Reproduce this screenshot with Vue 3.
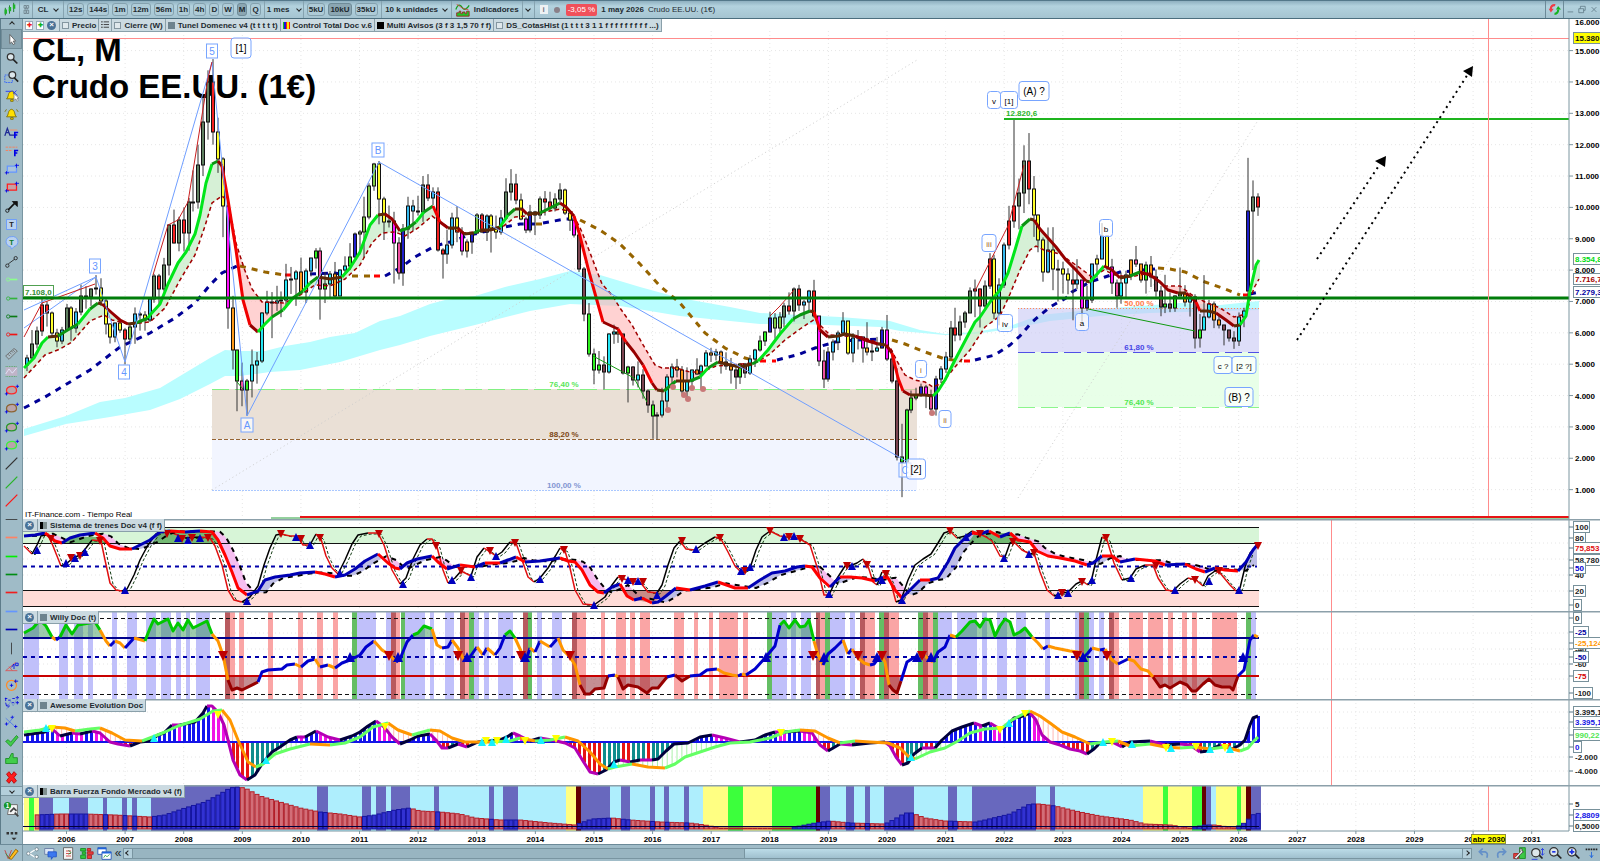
<script setup>
const X0 = 66.5;
const STEP = 4.884;
const RIGHT = 1569;

const monthX = (m) => X0 + STEP * m;
const priceY = (p) => 521 - 3.136 * p;

function pts(text) {
  return text
    .trim()
    .split(/\s+/)
    .map((pair) => pair.split(",").map(Number));
}

function at(list, x) {
  if (x <= list[0][0]) return list[0][1];
  for (let i = 1; i < list.length; i++) {
    const [x1, y1] = list[i - 1];
    const [x2, y2] = list[i];
    if (x <= x2) return y1 + ((y2 - y1) * (x - x1)) / (x2 - x1);
  }
  return list[list.length - 1][1];
}

const toPath = (list) => "M" + list.map((p) => p.join(" ")).join("L");

// splits a line into runs that share one colour
function runs(list, colorOf) {
  const out = [];
  for (let i = 1; i < list.length; i++) {
    const a = list[i - 1];
    const b = list[i];
    const color = colorOf((a[1] - b[1]) / (b[0] - a[0]), (a[1] + b[1]) / 2);
    const last = out[out.length - 1];
    if (last && last.color === color) last.list.push(b);
    else out.push({ color, list: [a, b] });
  }
  return out.map((r) => ({ color: r.color, d: toPath(r.list) }));
}

// area between two lines, split by which one is on top
function between(a, b, from = 24, to = 1259) {
  let up = "";
  let down = "";
  for (let x = from; x < to; x += 3) {
    const y1 = at(a, x);
    const y2 = at(b, x);
    const d = `M${x} ${y1}L${x + 3} ${at(a, x + 3)}V${at(b, x + 3)}L${x} ${y2}Z`;
    if (y1 < y2) up += d;
    else down += d;
  }
  return { up, down };
}

/* ---------- price ---------- */

// close, high, low per month, May 2005 on
const ohlc = pts(`
52,53,47.8 56.5,60.9,51 60.6,62,55 68.9,70.8,59 66.2,70,62 59.8,66.8,58.5 57.3,61.3,55.4 61,61.9,56.4
67.9,69.2,61 61.4,68.5,57.5 66.6,67.9,60 71.9,75.4,65.6 71.3,74.9,67.7 73.9,74.2,68.6 74.4,78.4,72.2 70.3,77.4,68.6 62.9,71,59.5 58.7,63,56.6 63.1,63.3,57 61,64.2,60
58.1,61.5,49.9 61.8,62.5,57 65.9,68.1,56.5 65.7,66.7,60.7 64,66.9,60.7 70.7,71.1,63.5 78.2,78.8,69.6 74,78.8,68.6 81.7,83.9,73.2 94.5,94.7,78.3 88.7,99.3,88.5 96,97,86
91.7,100,86 101.8,103,86.2 101.6,111.8,98.7 113.5,120,99.6 127.3,135,110 140,143.7,121.6 124,147.3,120 115.5,128.6,111 100.6,116,90.5 67.8,101,61.3 54.4,71.8,48.3 44.6,54.6,35
41.7,50.5,36.6 44.8,45.3,33.6 49.7,54.7,39.4 51.1,53.9,43.8 66.3,66.6,50.4 69.9,73.4,65.6 69.4,73,58.3 70,75,67 70.6,73.2,65 77,82,68 77.3,81,72.4 79.4,80,68.6
72.9,84,72.4 79.7,80.5,69.5 83.8,83.9,78 86.1,87,80.5 74,87.2,64.2 75.6,79.4,69.5 78.9,79.7,71 71.9,82.6,70.8 80,80.2,72.8 81.4,84.4,79.3 84.1,88.6,80 91.4,92,83.7
92.2,92.8,85 97,103.4,83.9 106.7,107.7,96.2 113.9,114.2,105.3 102.7,114.8,94.6 95.4,103.4,89.6 95.7,100.6,93.6 88.8,98.6,75.7 79.2,90.5,77 93.2,94.7,75 100.4,103.4,90 98.8,102.4,92.5
98.5,103.7,97.4 107,110,95.4 103,110.6,102 104.9,106.4,100.7 86.5,106.4,85.9 85,87,77.3 88,92.9,82 96.5,98.3,86.9 92.2,100.4,88.9 86.2,93.7,84.7 88.9,89.8,84 91.8,91.9,85.2
97.5,98.2,91.5 92,98.2,91.9 97.2,97.8,89.3 93.5,97.9,85.6 92,97.4,90 96.6,99.2,91.3 105,109.3,96 107.6,112.2,102.2 102.3,110.7,101 96.4,104.4,95.9 92.7,97,91.8 98.4,100.8,92
97.5,98.9,91.2 102.6,103.5,96.3 101.6,105.2,97.4 99.7,105,98.7 102.7,104.5,98.7 105.4,107.7,101.6 98.2,106,97.6 96,98.9,92.5 91.2,96,90.4 80.5,91.8,79.4 66.1,81,63.7 53.3,69.5,52.4
48.2,55,43.6 49.8,54.2,47 47.6,52.5,42 59.6,59.9,47 60.3,62.6,56.5 59.5,61.8,56.8 47.1,59.7,46.7 49.2,49.5,37.8 45,49.4,43.2 46.6,50.9,42.6 41.6,48.4,39 37,42,34.5
33.6,38.4,26.2 33.7,34.7,26 38.3,42.5,33 45.9,46.8,35.2 49.1,50.2,43 48.3,51.7,45.8 41.6,49.4,40.6 44.7,49,39.2 48.2,48.3,42.6 46.9,51.9,46.6 49.4,49.9,42.2 53.7,54.5,49.9
52.8,55.2,50.7 54,54.9,51.2 50.6,54.4,47 49.3,53.8,48.2 48.3,52,43.8 46,49.4,42.1 50.2,50.4,43.7 47.2,50.4,45.6 51.7,52.9,46.6 54.4,54.9,49.1 57.4,59.1,54 60.4,60.5,55.8
64.7,66.7,60.1 61.6,66.3,58.1 64.9,66.6,59.9 68.6,69.6,61.8 67,72.9,65.8 74.1,74.5,63.6 68.8,75.3,67 69.8,70.5,64.4 73.2,73.7,66.9 65.3,76.9,64.8 50.9,65.3,49.4 45.4,54.6,42.4
53.8,55.4,44.4 57.2,57.9,51.2 60.1,60.7,54.5 63.9,66.6,60 53.5,63.8,53 58.5,59.9,50.6 58.6,60.9,54.7 55.1,58.8,50.5 54,63.4,52.8 54.2,56.9,51 55.2,58.7,53.9 61,61.9,55
51.6,65.7,51 44.8,54.5,43.9 20.5,48.7,19.3 18.8,31,7.6 35.5,35.8,17 39.3,41.6,34.4 40.3,42.5,38.5 42.6,43.8,39.6 40.2,43.4,36 35.8,41.9,34.9 45.3,46.3,33.6 48.5,49.4,44
52.2,53.9,47.2 61.5,63.8,51.6 59.2,68,57.3 63.6,65.5,57.6 66.3,67,61.6 73.5,74.5,66.4 73.9,77,65 68.5,74.2,61.7 75,76.7,67 83.6,85.4,74 66.2,84.9,64.4 75.2,77.4,62.4
88.1,88.8,74.3 95.7,100.5,86.6 100.3,128.2,93.5 104.7,109.2,93 114.7,119.8,98.2 105.8,123.7,101 97.5,110,90.6 89.5,97.7,85.7 79.5,90.4,76.3 86.5,93.6,79 80.5,93.7,73.6 80.3,83.3,70
78.9,82.7,72.5 77,80.6,72.3 75.7,81,64 76.8,83.5,73.9 68,76.9,63.6 70.6,75,67 81.8,82,69.5 83.6,84.9,77.6 90.8,95,83.5 81,91,80 76,83.6,72.4 71.6,77,68
75.8,79.3,69.3 78.3,79.8,71.4 83.2,83.4,76.8 81.9,87.7,81 77,81.9,76 81.5,82.7,72.5 77.9,84.5,74.6 73.5,80.2,71.5 68.2,75,65.3 69.3,78.5,66.3 68,72.9,66.6 71.7,72,66.7
72.5,80.8,72 69.8,75.2,68.4 71.5,72,65.2 58.2,72.3,55 60.8,66,55.3 65.1,78.4,61.6 69.3,70.5,64.6 64,70,61.5 62.4,65.6,61.4 61,62.6,56 58.5,61,57.2 57.4,60.5,54.9
65.2,66.5,55.8 67,68,61.8 99,115.8,70 103.4,108.6,80 100.2,104.5,97.3
`);

const candleCodes =
  "BDDRRYYB" +
  "DYBDRDRYYYBY" +
  "RLBYYBDRDDRD" +
  "RDDDDDRYYMOG" +
  "PGCCCCOCBCCC" +
  "OCBGPGCOCCGN" +
  "LLLLYYBMPNBB" +
  "BDRBRRBBYMON" +
  "LRBYYBDDRYMN" +
  "YLRRLDYYMWWG" +
  "GGWCCOWGWCWW" +
  "GGCCCOOCCOCC" +
  "OCOWOWGWCCGG" +
  "NLLDRDRBBRMP" +
  "NBBBYBYMOCCN" +
  "MWWGGGGNMPNB" +
  "BDRDDDRRDRYB" +
  "BRRDDRYYYBYY" +
  "YYRBMNBYBYMP" +
  "CCOPOGOWWGWG" +
  "GOCWGCCOOWWW" +
  "CCNDR";

const candleColors = {
  D: "#5f7f60",
  R: "#f52020",
  Y: "#ffff2a",
  M: "#ff10ff",
  O: "#ff9a1a",
  G: "#2df01e",
  C: "#25e6f5",
  B: "#35b8ee",
  N: "#2020cc",
  L: "#82cc45",
  W: "#7c4450",
  P: "#ee4fa0",
};

const candles = ohlc.map(([close, high, low], i) => {
  let open = i ? ohlc[i - 1][0] : 49.7;
  if (i === 250) open = 73.5;
  const top = Math.round(priceY(Math.max(open, close)));
  return {
    x: Math.round(monthX(i - 8)),
    top,
    height: Math.max(1, Math.round(priceY(Math.min(open, close))) - top),
    high: priceY(high),
    low: priceY(low),
    color: candleColors[candleCodes[i]],
  };
});

const mainAvg = pts(`24,368 34,358 42,343 48,337 58,336 66,331 78,324 90,309 98,303 102,304 112,313 120,320 128,324 136,323 148,318 150,315 160,304 168,284 178,263 186,252 195,234 200,215 206,183 212,164 218,161 222,166 228,200 236,250 243,300 250,325 258,332 264,325 272,317 283,310 293,298 303,291 310,283 318,277 330,279 342,277 350,268 360,252 370,225 378,215 385,214 392,219 400,231 408,228 416,222 424,212 433,206 440,222 448,228 458,228 464,234 474,233 480,230 490,230 500,227 508,215 515,209 522,209 527,214 540,213 548,209 560,203 566,207 574,216 580,236 588,268 594,290 603,322 618,329 626,342 634,352 643,365 652,383 657,390 664,391 676,381 690,381 700,377 708,368 718,362 726,364 740,367 752,364 758,361 768,350 780,334 793,319 800,315 810,311 814,312 820,330 828,337 838,336 845,334 855,336 868,341 878,344 886,345 892,353 898,378 903,391 910,395 925,395 933,396 938,391 945,380 955,360 965,341 975,322 980,317 990,302 1000,290 1008,273 1015,250 1022,226 1030,219 1034,220 1040,229 1048,238 1056,247 1066,260 1076,270 1086,281 1090,282 1098,273 1104,266 1112,270 1120,278 1130,276 1140,272 1150,275 1160,282 1168,290 1178,293 1186,293 1196,302 1200,311 1208,311 1216,313 1226,320 1234,326 1240,325 1246,316 1250,291 1256,265 1259,260`);
const slowAvg = pts(`24,378 45,355 60,349 72,342 90,321 104,315 112,320 128,324 140,323 150,322 165,308 180,280 195,255 205,226 212,203 222,196 228,201 236,243 244,268 252,289 262,302 285,303 300,295 315,285 330,286 345,279 360,265 372,243 382,233 395,232 405,236 418,228 432,216 440,222 450,228 462,233 475,232 500,229 515,217 525,216 540,213 560,209 572,212 582,232 592,258 602,284 612,295 620,308 632,325 642,343 655,365 662,368 676,368 690,372 702,372 716,366 755,363 770,354 785,340 800,329 815,319 820,325 830,335 862,337 890,347 897,361 905,375 915,380 925,382 933,387 942,383 955,367 970,350 985,327 1000,316 1010,294 1020,270 1030,250 1036,246 1044,250 1060,254 1080,268 1092,277 1104,270 1115,275 1130,277 1150,273 1165,286 1180,286 1192,295 1205,302 1220,308 1234,317 1246,314 1254,288 1259,279`);

const mainRuns = runs(mainAvg, (s) => {
  if (s > 0.9) return "#00e61a";
  if (s > 0.35) return "#0a9412";
  if (s > -0.3) return "#5c2a08";
  if (s > -1.6) return "#960000";
  return "#f00000";
});
const mainFill = between(mainAvg, slowAvg);

const longAvg = [
  ["#000096", "24,408 45,397 60,388 90,370 120,347 150,333 175,318 195,303 210,285 222,273 237,266"],
  ["#966400", "240,266 265,272 284,275"],
  ["#f00", "285,275 293,275"],
  ["#000096", "310,274 335,273 345,275"],
  ["#966400", "352,276 373,276"],
  ["#f00", "374,276 383,276"],
  ["#000096", "385,276 400,268 415,257 435,246 450,242 470,235 500,228 520,224 535,224"],
  ["#966400", "536,224 542,224"],
  ["#000096", "543,223 565,219 573,219"],
  ["#966400", "580,220 600,230 620,244 640,264 660,286 680,303 705,333 725,348 745,358 757,361"],
  ["#f00", "760,361 776,361"],
  ["#000096", "777,360 800,354 815,348 835,342 855,340 880,339"],
  ["#966400", "892,340 905,344 925,352 945,359 962,361"],
  ["#f00", "964,361 971,361"],
  ["#000096", "975,360 995,355 1010,345 1020,336 1032,322 1050,307 1066,298 1072,292 1090,282 1105,277 1120,272 1155,269"],
  ["#966400", "1158,268 1170,269 1185,272 1205,282 1225,289 1240,295"],
  ["#f00", "1243,295 1248,295"],
  ["#000096", "1250,294 1259,292"],
].map(([color, p]) => ({ color, d: toPath(pts(p)) }));

const cloud =
  "24,429 66,416 100,402 125,398 160,388 190,370 210,358 225,350 240,351 265,351 285,346 310,342 330,337 355,333 380,321 400,316 430,304 445,300 475,296 505,287 540,279 570,271 600,275 640,287 680,298 730,307 760,313 800,315 840,317 890,321 920,330 945,334 975,332 1010,326 1040,315 1100,309 1180,303 1220,305 1259,301 " +
  "1259,310 1220,311 1150,313 1100,316 1050,321 1010,329 975,334 945,335 900,331 880,327 800,324 760,324 680,316 620,306 570,304 530,311 475,325 430,336 400,345 380,350 340,362 300,370 270,372 240,376 225,376 210,384 180,399 150,410 110,417 66,424 24,436";

const waveLines = [
  ["#6f9eff", "24,310 96,277"],
  ["#6f9eff", "24,328 96,277 125,362 212,62 247,416 379,162 906,461"],
  ["#c82020", "24,337 42,303 95,284"],
  ["#c82020", "153,275 168,225 178,220 188,202 208,78 212,62"],
  ["#c82020", "770,316 780,306 794,290"],
  ["#c82020", "975,291 1008,226 1024,165"],
  ["#109a10", "237,382 243,389"],
  ["#109a10", "593,356 634,378 647,402"],
  ["#109a10", "1088,309 1195,331"],
];

const waveTags = [
  { x: 212, y: 51, t: "5", w: 11, h: 14, k: "blue" },
  { x: 95, y: 266, t: "3", w: 11, h: 14, k: "blue" },
  { x: 124, y: 372, t: "4", w: 11, h: 14, k: "blue" },
  { x: 378, y: 150, t: "B", w: 12, h: 14, k: "blue" },
  { x: 247, y: 425, t: "A", w: 12, h: 14, k: "blue" },
  { x: 905, y: 470, t: "C", w: 12, h: 14, k: "blue" },
  { x: 241, y: 48, t: "[1]", w: 20, h: 20, k: "round" },
  { x: 916, y: 469, t: "[2]", w: 19, h: 20, k: "round" },
  { x: 989, y: 243, t: "iii", w: 14, h: 17, k: "small orange" },
  { x: 994, y: 100, t: "v", w: 13, h: 17, k: "small" },
  { x: 1009, y: 100, t: "[1]", w: 17, h: 17, k: "small" },
  { x: 1034, y: 91, t: "(A) ?", w: 30, h: 19, k: "round" },
  { x: 1005, y: 323, t: "iv", w: 15, h: 17, k: "small" },
  { x: 921, y: 369, t: "i", w: 11, h: 17, k: "small orange" },
  { x: 945, y: 419, t: "ii", w: 12, h: 17, k: "small orange" },
  { x: 1106, y: 228, t: "b", w: 13, h: 17, k: "small" },
  { x: 1082, y: 322, t: "a", w: 13, h: 17, k: "small" },
  { x: 1223, y: 365, t: "c ?", w: 18, h: 17, k: "small" },
  { x: 1244, y: 365, t: "[2 ?]", w: 24, h: 17, k: "small" },
  { x: 1239, y: 397, t: "(B) ?", w: 28, h: 19, k: "round" },
];

const dots = pts("668,410 684,395 688,399 692,388 673,387 703,389 932,413");

/* ---------- sistema de trenes ---------- */

const fast = pts(`24,546 32,554 37,545 42,534 48,534 53,546 61,566 66,564 73,558 80,555 86,548 92,540 101,541 105,560 110,583 116,590 122,591 127,589 134,575 140,560 148,545 156,534 164,530 175,534 185,538 200,537 210,538 215,546 222,565 228,590 234,600 242,602 250,597 258,586 264,565 270,548 276,535 281,534 290,536 297,536 303,545 310,545 316,534 321,539 326,556 332,568 338,574 345,560 352,544 358,535 368,533 378,533 384,545 392,570 400,584 406,578 413,559 420,545 427,539 432,539 437,547 443,570 448,583 455,578 461,571 471,576 477,557 484,548 490,552 496,556 502,552 510,542 516,543 522,560 528,577 534,582 540,578 548,568 556,555 560,548 565,551 570,568 575,590 583,604 594,605 605,597 612,585 618,577 627,580 640,582 648,592 657,593 662,585 668,565 674,548 680,541 686,549 695,550 705,543 715,537 721,539 728,552 735,566 741,572 750,568 756,550 762,537 770,531 780,536 793,537 800,539 810,545 818,570 824,595 829,595 836,580 845,566 852,565 857,563 863,559 868,566 873,582 877,585 882,572 886,573 891,583 896,602 901,600 908,580 915,565 923,559 931,554 938,543 944,533 950,531 957,538 965,536 972,531 980,534 986,537 992,541 1000,556 1005,557 1010,543 1014,542 1022,550 1030,554 1034,553 1040,572 1047,590 1054,596 1063,593 1068,592 1076,584 1082,581 1088,585 1092,578 1096,560 1102,537 1107,540 1114,563 1122,580 1130,578 1136,569 1145,565 1153,565 1158,578 1166,590 1173,591 1180,584 1188,578 1196,580 1203,586 1208,576 1215,571 1220,573 1230,585 1236,591 1240,588 1245,567 1250,553 1258,545`);
const slow = pts(`24,536 35,535 45,533 55,541 62,543 70,538 80,535 95,533 103,538 110,546 120,549 132,549 140,545 150,540 160,532 170,531 185,532 200,531 212,532 218,540 225,555 232,572 238,588 247,595 258,591 265,580 275,577 290,575 300,573 315,572 325,574 335,577 345,575 355,569 365,561 378,554 388,563 395,568 400,569 407,563 417,559 432,556 438,562 447,569 460,565 475,567 485,563 500,563 508,560 516,557 525,562 540,561 560,558 568,561 575,562 582,570 590,585 598,592 604,593 612,587 620,584 627,596 634,600 642,598 652,603 658,602 666,596 676,588 690,590 705,586 718,582 735,588 748,588 760,580 772,573 785,571 797,567 805,566 812,567 820,578 830,587 840,577 850,577 862,578 875,581 883,577 888,578 895,590 902,598 910,590 920,580 930,580 938,578 948,562 955,548 965,538 972,533 980,534 989,531 1000,537 1010,533 1018,540 1030,542 1037,551 1048,556 1060,558 1075,561 1087,565 1093,563 1102,556 1112,556 1120,562 1135,559 1155,561 1165,565 1185,564 1196,569 1205,572 1215,568 1225,570 1238,571 1246,562 1253,550 1258,544`);
const slowLag = slow
  .filter((p) => p[0] < 1250)
  .map(([x, y], i, all) => [x + 8, i ? (y * 2 + all[i - 1][1]) / 3 : y]);
const fastRuns = runs(fast, (s) => (s > 0 ? "#000" : "#e01010"));
const slowRuns = runs(slow, (s) => (s > 0 ? "#0000b4" : "#ff0000"));
const slowFill = between(slow, slowLag, 33, 1256);
const fastLagPath = toPath(fast.filter((p) => p[0] < 1255).map(([x, y]) => [x + 3, y + 1]));
const slowLagPath = toPath(slowLag);

const trainDown = pts("51,539 71,558 80,556 100,541 167,534 182,539 192,538 208,538 281,534 301,539 320,538 379,534 436,546 461,571 490,551 515,543 564,550 622,579 633,582 643,582 682,541 720,538 745,571 770,531 789,537 800,539 847,566 867,565 886,574 950,531 980,534 1013,542 1034,553 1062,593 1082,582 1106,538 1156,566 1195,580 1219,571 1258,546");
const trainUp = pts("37,550 66,563 75,558 85,552 125,590 178,538 188,540 200,538 247,601 296,537 310,545 340,573 403,584 452,580 471,577 496,556 540,579 594,605 628,580 638,581 657,595 696,549 741,571 750,567 784,537 794,536 829,594 852,566 882,580 902,600 966,537 1004,558 1029,554 1058,595 1068,593 1092,580 1131,578 1175,590 1209,581 1239,590");

const tri = ([x, y], dir, r = 4) =>
  dir === "up"
    ? `${x - r},${y + r} ${x + r},${y + r} ${x},${y - r}`
    : `${x - r},${y - r} ${x + r},${y - r} ${x},${y + r}`;

/* ---------- willy ---------- */

const bands = (color, text) => pts(text).map(([a, b]) => ({ x: a, w: b - a, color }));

const willyBands = [
  ...bands("#c0c0fa", "24,39 59,68 74,83 88,93 112,117 127,137 146,156 161,171 176,181 186,190 196,210 357,376 386,391 405,425 430,434 445,454 474,479 484,489 498,513 537,542 552,562 772,787 791,796 801,811 830,845 850,855 938,952 957,977 982,987 997,1007 1016,1026 1045,1050 1075,1079 1089,1094 1099,1104 1251,1256"),
  ...bands("#faa5a5", "230,235 239,244 268,273 298,303 317,323 333,338 396,400 465,469 577,586 601,605 616,626 630,635 640,650 674,684 694,698 709,713 719,738 743,748 820,825 865,875 889,899 928,933 1114,1119 1129,1143 1148,1163 1168,1173 1182,1187 1192,1197 1212,1237"),
  ...bands("#b85a5f", "225,230 391,396 460,465 523,528 572,577 816,820 860,865 884,889 923,928 1079,1084 1109,1114"),
  ...bands("#64be64", "352,357 401,405 469,474 528,532 767,772 825,830 879,884 918,923 933,938 1084,1089 1246,1251"),
];

const willy = pts(`24,633 33,628 40,620 46,626 52,637 56,640 60,637 66,625 72,634 78,625 95,622 100,630 106,641 110,646 115,641 120,643 125,648 134,638 145,641 150,628 154,619 158,624 168,619 173,631 178,623 183,630 188,620 193,628 207,621 212,634 218,641 223,655 228,680 232,690 237,688 242,690 258,682 262,672 268,670 282,669 287,665 295,664 301,667 308,661 315,659 320,667 328,665 335,668 342,663 350,660 360,655 366,647 374,641 382,650 390,655 396,662 400,659 407,642 413,635 418,633 424,626 432,629 437,645 442,648 448,647 452,640 458,648 463,658 467,661 472,654 477,647 483,655 487,648 495,655 500,648 505,635 510,631 515,638 521,651 526,660 530,648 535,652 540,641 550,647 558,638 563,650 570,657 575,665 580,685 585,694 590,694 595,689 604,688 608,676 615,675 618,677 623,689 628,685 638,687 647,693 652,688 658,688 667,677 675,675 682,681 690,676 700,675 707,670 717,669 724,673 732,675 738,676 742,674 746,675 755,669 765,658 775,646 780,625 784,621 789,628 795,620 800,627 805,626 809,620 814,641 818,655 823,665 828,654 835,648 843,640 848,654 852,649 858,658 864,663 870,665 874,664 881,655 885,662 889,685 893,690 897,693 901,681 907,662 915,657 920,657 925,656 930,660 933,662 938,652 945,647 950,635 956,637 962,631 970,622 975,621 980,627 985,619 990,620 995,636 1000,626 1005,619 1010,622 1014,635 1020,632 1025,628 1032,637 1038,643 1043,649 1048,646 1055,648 1070,651 1078,652 1083,658 1088,653 1092,648 1100,650 1105,649 1112,660 1118,664 1128,659 1134,661 1141,669 1148,671 1153,677 1160,687 1165,685 1170,688 1180,682 1187,685 1192,691 1196,691 1203,684 1209,679 1215,685 1222,687 1230,687 1233,690 1238,676 1244,670 1248,650 1250,640 1254,635 1258,637`);
const willyRuns = runs(willy, (s, y) => {
  if (y < 635) return "#00c800";
  if (y > 677) return "#960000";
  return s > 0 ? "#0000cd" : "#ff9600";
});
const clampLine = (list, fn) => {
  const out = [];
  for (let x = 24; x <= 1258; x += 2) out.push([x, fn(at(list, x))]);
  return out;
};
const willyOver = toPath([[24, 637], ...clampLine(willy, (y) => Math.min(y, 637)), [1258, 637]]);
const willyUnder = toPath([[24, 676], ...clampLine(willy, (y) => Math.max(y, 676)), [1258, 676]]);
const willyDown = pts("223,656 389,656 458,656 521,656 570,656 813,656 858,656 882,656 922,656 1077,656 1107,656");
const willyUp = pts("350,657 398,657 467,657 525,657 766,657 824,657 877,657 917,657 931,657 1083,657 1243,657");

/* ---------- awesome ---------- */

const ZERO = 742;
const osc = pts(`24,735 45,732 50,727 60,736 72,733 80,734 92,731 100,733 110,742 118,744 130,746 140,742 150,741 158,735 164,733 172,725 180,725 195,722 203,713 207,706 212,706 218,712 224,725 228,740 233,760 240,775 247,780 255,775 262,764 272,752 280,747 290,740 297,737 305,737 316,731 328,737 340,740 352,736 360,732 368,726 376,721 384,727 392,737 400,744 410,740 418,736 430,734 436,740 442,748 448,748 458,744 467,747 478,742 490,741 500,740 507,737 513,733 520,736 530,741 540,738 552,740 565,743 575,748 583,761 590,772 598,774 606,770 614,762 620,760 630,762 640,760 652,760 658,759 666,751 674,744 688,743 700,737 712,735 725,738 740,742 755,740 765,735 775,732 785,732 800,731 812,733 820,745 828,751 840,744 852,745 870,743 885,742 890,746 896,757 902,765 908,763 914,754 922,748 935,748 942,740 952,731 962,727 974,723 982,726 990,723 1000,729 1008,725 1014,718 1020,717 1030,713 1036,720 1042,735 1050,742 1060,745 1070,749 1080,751 1087,754 1094,749 1100,743 1112,742 1122,747 1130,742 1150,741 1165,745 1180,744 1190,745 1200,752 1208,751 1220,745 1232,749 1240,745 1245,740 1250,725 1253,718 1258,716`);
const signal = pts(`24,732 40,730 52,727 65,728 75,731 90,729 100,728 112,733 125,740 142,741 155,736 165,732 178,726 200,719 213,711 222,710 230,720 238,740 248,762 256,767 263,764 275,754 290,749 310,744 330,745 345,743 360,737 373,727 388,723 398,730 412,735 430,730 440,731 452,738 465,742 490,742 510,741 520,738 535,741 550,740 565,737 578,741 590,752 600,764 608,769 615,767 632,764 648,767 665,768 675,764 685,757 700,752 715,747 730,743 750,742 770,738 785,732 800,730 815,731 828,738 840,743 855,741 870,742 888,743 900,748 908,756 915,759 930,752 945,748 958,741 970,733 985,729 1002,728 1012,720 1025,713 1030,711 1040,716 1050,723 1062,732 1075,737 1090,744 1105,742 1118,741 1130,746 1150,744 1165,747 1180,748 1195,747 1210,749 1225,747 1240,751 1248,748 1253,742 1258,737`);
const oscRuns = runs(osc, (s) => (s > 0 ? "#00003c" : "#b400b4"));
const signalRuns = runs(signal, (s) => (s > 0 ? "#64ff64" : "#ff9600"));
const months = Array.from({ length: 253 }, (_, i) => i - 8);
const oscBars = months.map((m) => {
  const x = Math.round(monthX(m));
  const y = at(osc, x);
  const rising = at(osc, x - 4) > y;
  const color = y < ZERO ? (rising ? "#1414f0" : "#f014e6") : rising ? "#0f8c8c" : "#e61414";
  return { x: x - 1, y: Math.min(y, ZERO), h: Math.abs(y - ZERO), color };
});
const paleBars = months.map((m) => {
  const x = monthX(m);
  const y1 = at(osc, x);
  const y2 = at(signal, x);
  return { x, y1, y2, color: y2 > y1 ? "#aaf0aa" : "#ffb9b4" };
});
const oscDown = pts("52,729 218,715 385,727 486,741 497,741 525,741 556,739 781,733 1000,730 1025,714 1112,742 1166,748 1196,747 1225,748");
const oscUp = pts("46,728 154,738 266,760 482,742 492,742 506,739 541,740 614,764 911,757 1009,723 1103,742 1132,744 1171,748 1210,749 1230,749");

/* ---------- barra fuerza ---------- */

const forceBands = [
  ...bands("#aeeefd", "39,1143 1211,1216"),
  ...bands("#ffff82", "24,39 566,576 703,728 743,772 1143,1192 1216,1246"),
  ...bands("#3cff3c", "29,34 728,743 772,816 1163,1168 1192,1202 1237,1241"),
  ...bands("#6868be", "39,53 69,88 103,107 122,127 132,137 151,239 317,328 362,371 376,386 391,410 434,439 489,494 503,518 581,610 621,630 650,655 664,669 684,689 820,830 846,854 865,870 884,914 948,957 972,1036 1050,1055 1206,1211 1251,1261"),
  ...bands("#640000", "576,581 816,820 1202,1206 1246,1251"),
];
const force = pts(`34,815 60,814 85,814 115,815 150,817 165,815 185,808 205,802 220,794 230,788 237,787 245,788 260,796 280,802 300,808 320,812 340,814 360,817 375,815 395,810 410,808 420,811 440,812 460,814 475,818 500,820 520,820 550,823 575,825 592,819 612,818 630,820 660,822 690,823 705,825 720,828 760,828 790,828 800,826 815,823 830,821 850,823 885,824 895,819 905,813 912,813 925,818 945,821 975,822 985,820 1010,814 1030,804 1040,804 1055,806 1080,812 1100,816 1130,820 1145,824 1170,825 1190,828 1205,825 1215,825 1235,828 1246,822 1252,815 1260,813`);
const forceBars = months.slice(2).map((m) => {
  const x = monthX(m);
  const y = at(force, x);
  const slate = forceBands.some((b) => b.color === "#6868be" && x >= b.x && x <= b.x + b.w);
  const blue = slate || at(force, x - 5) > y + 0.6;
  return { x: x - 2, y, h: 829 - y, kind: blue ? "force-blue" : "force-red" };
});

/* ---------- axes ---------- */

const years = Array.from({ length: 26 }, (_, i) => 2006 + i).map((y) => ({
  label: y,
  x: monthX((y - 2006) * 12),
}));
const priceTicks = Array.from({ length: 15 }, (_, i) => ({ y: priceY((i + 1) * 10), t: `${i + 1}.000` }));

const axisTags = {
  price: [
    { y: 38, t: "15.380", k: "yellow" },
    { y: 259, t: "8.354,8", color: "#00dc14" },
    { y: 279, t: "7.716,7", color: "#a00000" },
    { y: 292, t: "7.279,3", color: "#0000a0" },
  ],
  trenes: [
    { y: 538, t: "80", w: 12 },
    { y: 575, t: "40", k: "plain" },
    { y: 560, t: "58,780" },
    { y: 548, t: "75,853", color: "#e01010" },
    { y: 527, t: "100", w: 16 },
    { y: 568, t: "50", w: 12, color: "#0000d2" },
    { y: 591, t: "20", w: 12 },
    { y: 605, t: "0", w: 8 },
  ],
  willy: [
    { y: 649, t: "-40", k: "plain" },
    { y: 664, t: "-60", k: "plain" },
    { y: 618, t: "0", w: 8 },
    { y: 632, t: "-25", w: 15, color: "#0000a0" },
    { y: 643, t: "-25,124", color: "#ff9600" },
    { y: 657, t: "-50", w: 15, color: "#0000a0" },
    { y: 676, t: "-75", w: 15, color: "#d20000" },
    { y: 693, t: "-100", w: 19 },
  ],
  awesome: [
    { y: 735, t: "990,22", color: "#50e650" },
    { y: 712, t: "3.395,1" },
    { y: 722, t: "3.395,1", color: "#1414e6" },
    { y: 747, t: "0", w: 8, color: "#1414e6" },
    { y: 757, t: "-2.000", k: "plain" },
    { y: 771, t: "-4.000", k: "plain" },
  ],
  barra: [
    { y: 804, t: "5", k: "plain" },
    { y: 815, t: "2,8809", color: "#1414e6" },
    { y: 826, t: "0,5000" },
  ],
};

/* ---------- bars and icons ---------- */

const periods = ["12s", "144s", "1m", "12m", "56m", "1h", "4h", "D", "W", "M", "Q"];
const units = ["5kU", "10kU", "35kU"];

const legend = [
  { name: "Cierre (W)", mark: "box" },
  { name: "Tunel Domenec v4 (t t t t t)", mark: "grey" },
  { name: "Control Total Doc v.6", mark: "stripes" },
  { name: "Multi Avisos (3 f 3 1,5 70 f f)", mark: "black" },
  { name: "DS_CotasHist (1 t t t 3 1 1 f f f f f f f f f ...)", mark: "box" },
];

const seg = (c) => [{ d: "M7 9H16", s: c, w: 2 }, { d: "M3 9a2 2 0 1 0 4 0a2 2 0 1 0-4 0", s: c }];
const oval = (c) => [
  { d: "M3 9C3 5 7 4 10 4S15 6 15 9S12 13 9 13S3 12 3 9", s: c, f: "#b9a5aa", w: 1.5 },
  { d: "M1 13h4M3 11v4M14 4h4M16 2v4", s: "#0000e6" },
];
const slant = (c) => [{ d: "M2 16L16 2", s: c, w: 1.5 }];
const flat = (c) => [{ d: "M2 9H16", s: c, w: 2 }];
const frame = (c, f) => [
  { d: "M4 5H15V12H4Z", s: c, f, w: 1.5 },
  { d: "M1 13h5M3 11v4M13 4h5M15 2v5", s: "#0000e6" },
];
const lens = { d: "M4 7a4 4 0 1 0 8 0a4 4 0 1 0-8 0", s: "#333", f: "#dce6ea", w: 1.5 };
const bell = { d: "M3 13C6 11 4 5 9 4C14 5 12 11 15 13ZM8 14h3v2H8Z", s: "#7a6a00", f: "#ffe000" };

const tools = [
  { n: "Cursor", p: [{ d: "M7 3V14L9 12L11 15L13 14L11 11H14Z", s: "#555", f: "#fff" }] },
  { n: "Zoom", p: [lens, { d: "M11 10L16 15", s: "#222", w: 2 }] },
  { n: "Zoom de zona", p: [{ d: "M1 6H10V15H1Z", s: "#2a5cff", dash: "2 1" }, { ...lens, d: "M6 6a4 4 0 1 0 8 0a4 4 0 1 0-8 0" }, { d: "M12 9L17 14", s: "#222", w: 2 }] },
  { n: "Alerta sobre objeto", p: [bell, { d: "M2 4h7M10 3l6 6M15 3l-4 4", s: "#1a2aff" }, { d: "M12 7v8l2-2 2 3 1-1-1-3h2Z", s: "#888", f: "#fff" }] },
  { n: "Alerta", p: [bell, { d: "M3 4L1 7M15 4L17 7", s: "#7a6a00" }] },
  { n: "Extension Fibonacci", p: [{ d: "M1 13L4 4L7 12H12M3 9h3", s: "#1e2896", w: 1.5 }, { d: "M7 6H16", s: "#ff8a5a" }, { d: "M13 16V9H17M13 12h3", s: "#0000e6", w: 2 }] },
  { n: "Retroceso Fibonacci", p: [{ d: "M2 5H16M2 9H10", s: "#ff7850", dash: "3 1" }, { d: "M13 16V9H17M13 12h3", s: "#0000e6", w: 2 }] },
  { n: "Rectangulo azul", p: frame("#6496ff", "#aac3dc") },
  { n: "Rectangulo rojo", p: frame("#ff1e1e", "#c8a0a5") },
  { n: "Flecha", p: [{ d: "M5 13L13 5", s: "#111", w: 2 }, { d: "M10 3H16V9Z", s: "#111", f: "#111" }, { d: "M2 14a2 2 0 1 0 4 0a2 2 0 1 0-4 0", s: "#111" }] },
  { n: "Texto", p: [{ d: "M3 3H15V15H3Z", s: "#6496ff", f: "#bad2ee" }], t: "T", tc: "#222" },
  { n: "Comentario", p: [{ d: "M9 2A6 6 0 0 1 12 14L9 17L8 14A6 6 0 0 1 9 2", s: "#6496ff", f: "#bad2ee" }], t: "T", tc: "#0a7a2a" },
  { n: "Segmento", p: [{ d: "M5 12L13 6", s: "#222" }, { d: "M2 14a2 2 0 1 0 4 0a2 2 0 1 0-4 0M12 5a2 2 0 1 0 4 0a2 2 0 1 0-4 0", s: "#222" }] },
  { n: "Semirrecta verde clara", p: seg("#8cff8c") },
  { n: "Semirrecta verde", p: seg("#32b43c") },
  { n: "Semirrecta verde oscura", p: seg("#0a7a14") },
  { n: "Semirrecta roja", p: seg("#f01414") },
  { n: "Regla", p: [{ d: "M2 12L12 3L16 6L6 16Z", s: "#666", f: "#a8bcc6" }, { d: "M5 10l2 2M7 8l2 2M9 6l2 2M11 5l2 2", s: "#666" }] },
  { n: "Canal", p: [{ d: "M2 3H16M2 15H16", s: "#50a050", dash: "1 1" }, { d: "M2 4H16V14H2Z", s: "none", f: "#c0b4c8" }, { d: "M2 12L6 6L10 11L15 5", s: "#e6ebff" }] },
  { n: "Elipse roja", p: oval("#ff2828") },
  { n: "Elipse marron", p: oval("#8c6432") },
  { n: "Elipse verde", p: oval("#289628") },
  { n: "Elipse verde clara", p: oval("#3cf03c") },
  { n: "Linea negra", p: slant("#333") },
  { n: "Linea verde", p: slant("#28b428") },
  { n: "Linea roja", p: slant("#ff1414") },
  { n: "Horizontal negra", p: [{ d: "M2 9H16", s: "#333" }] },
  { n: "Horizontal salmon", p: flat("#ff8264") },
  { n: "Horizontal verde", p: flat("#00f000") },
  { n: "Horizontal verde oscura", p: flat("#008c14") },
  { n: "Horizontal roja", p: flat("#f01e1e") },
  { n: "Horizontal azul clara", p: flat("#6496ff") },
  { n: "Horizontal azul", p: flat("#0000b4") },
  { n: "Vertical", p: [{ d: "M9 2V16", s: "#333" }] },
  { n: "Angulo", p: [{ d: "M16 14H2L14 4M6 9l4 5", s: "#dc5050" }, { d: "M9 10l3-4v6M14 5h3v3h-3Z", s: "#0000e6" }] },
  { n: "Ciclo", p: [{ d: "M3 10a6 6 0 1 0 12 0a6 6 0 1 0-12 0", s: "#ff8c28", w: 1.5 }, { d: "M7 10h4M9 8v4M12 5h5M14 3v4", s: "#0000e6" }] },
  { n: "Ondas 12345", p: [{ d: "M1 3h3M2 2v4M5 5h3M10 3h3M14 2h4M16 0v4M9 8h3M14 8h4M16 6v4M3 12h4M5 10v4M2 8l1 4", s: "#0000e6" }, { d: "M3 16L8 6L11 12L16 2", s: "#7896c8" }] },
  { n: "Ondas abc", p: [{ d: "M1 12h4M3 10v4M8 4h4M10 2v4M12 15h4M14 13v4", s: "#0000e6" }, { d: "M2 5L12 14M3 14L12 3", s: "#5078e6" }] },
  { n: "Confirmar", p: [{ d: "M2 10L5 8L8 11L15 3L17 5L8 16Z", s: "#198c23", f: "#41cd4b" }] },
  { n: "Me gusta", p: [{ d: "M2 9H6L9 3H11V8H16V15H6L2 15Z", s: "#198c23", f: "#41cd4b" }] },
  { n: "Borrar", p: [{ d: "M3 5L6 2L9 6L12 2L15 5L12 9L15 13L12 16L9 12L6 16L3 13L6 9Z", s: "#b40000", f: "#ff1e1e" }] },
];

const footLeft = [
  { n: "Compartir", p: [{ d: "M5 9L13 4M5 9L13 14", s: "#fff", w: 1.5 }, { d: "M2 9a2 2 0 1 0 4 0a2 2 0 1 0-4 0M12 4a2 2 0 1 0 4 0a2 2 0 1 0-4 0M12 13a2 2 0 1 0 4 0a2 2 0 1 0-4 0", s: "#6a7f8a", f: "#fff" }] },
  { n: "Chat", p: [{ d: "M2 3H13V10H2Z", s: "#6478a0", f: "#dce6f5" }, { d: "M6 7H16V13H12L10 16V13H6Z", s: "#1e50c8", f: "#3c78f0" }] },
  { n: "Notas", p: [{ d: "M3 2H14V16H3Z", s: "#555", f: "#f5f5f5" }, { d: "M6 6H12M6 9H12M6 12H12", s: "#d23232" }, { d: "M9 5L12 8L9 10", s: "#1e8c32" }] },
  { n: "Cartera", p: [{ d: "M2 3H8V6H2ZM4 7H8V10H4ZM2 11H8V15H2Z", s: "#148c1e", f: "#32c83c" }, { d: "M10 3H14V6H10ZM10 7H17V10H10ZM10 11H15V15H10Z", s: "#aa1e1e", f: "#f03c3c" }] },
  { n: "Ventanas", p: [{ d: "M1 2H11V10H1Z", s: "#1e50b4", f: "#fff" }, { d: "M1 3H11", s: "#1e64dc", w: 2 }, { d: "M6 7H17V16H6Z", s: "#1e50b4", f: "#fff" }, { d: "M6 8H17", s: "#1e64dc", w: 2 }, { d: "M8 14l2-3 2 2 3-3", s: "#28a03c" }] },
];
const footRight = [
  { n: "Deshacer", p: [{ d: "M4 7H11Q15 8 13 14M8 3L4 7L8 11", s: "#6490c8", w: 2 }] },
  { n: "Rehacer", p: [{ d: "M14 7H7Q3 8 5 14M10 3L14 7L10 11", s: "#6490c8", w: 2 }] },
  { n: "Ajustes", p: [{ d: "M9 2H16V15H9Z", s: "#148c1e", f: "#3cc846" }, { d: "M2 9H8V15H2Z", s: "#aa1e1e", f: "#e63c3c" }, { d: "M3 14L10 7L9 4L12 3L12 6L14 7L11 9L5 16Z", s: "#444", f: "#eef2f4" }] },
  { n: "Zoom auto", p: [{ ...lens, d: "M2 8a5 5 0 1 0 10 0a5 5 0 1 0-10 0" }, { d: "M11 11L15 15", s: "#222", w: 2 }, { d: "M15 3V11M13 5L15 3L17 5M13 9L15 11L17 9M2 16H9", s: "#1e32e6" }] },
  { n: "Alejar", p: [{ ...lens, d: "M2 7a5 5 0 1 0 10 0a5 5 0 1 0-10 0" }, { d: "M11 10L16 15", s: "#222", w: 2 }, { d: "M5 7H9", s: "#1e32e6", w: 2 }] },
  { n: "Acercar", p: [{ ...lens, d: "M2 7a5 5 0 1 0 10 0a5 5 0 1 0-10 0" }, { d: "M11 10L16 15", s: "#222", w: 2 }, { d: "M4 7H10M7 4V10", s: "#1e32e6", w: 2 }] },
  { n: "Espaciado", p: [{ d: "M2 4H17", s: "#222", w: 2, dash: "2 1" }, { d: "M9 7V14M7 11L9 14L11 11", s: "#1e64dc" }] },
];

const panes = [
  { id: "trenes", title: "Sistema de trenes Doc v4 (f f)", mark: "duo", top: 519, height: 92 },
  { id: "willy", title: "Willy Doc (t)", mark: "grey", top: 611, height: 88 },
  { id: "awesome", title: "Awesome Evolution Doc", mark: "grey", top: 699, height: 86 },
  { id: "barra", title: "Barra Fuerza Fondo Mercado v4 (f)", mark: "duo", top: 785, height: 59 },
];
const paneGrid = {
  trenes: [543, 559, 575, 591],
  willy: [633, 649, 664, 679],
  awesome: [712, 728, 757, 771],
  barra: [804],
};
</script>

<template>
  <div class="app">
    <header class="toolbar">
      <button class="flat" aria-label="Tipo de grafico">
        <svg class="icon" viewBox="0 0 18 18">
          <path d="M4 7V16M9 4V14M14 1V12" stroke="#0a6e14" />
          <path d="M3 9h3v5H3ZM8 6h3v5H8ZM13 3h3v5h-3Z" fill="#1eb428" />
        </svg>
      </button>
      <button class="flat" aria-label="Vincular">
        <svg class="icon thin" viewBox="0 0 12 18">
          <path d="M3 3h3v4H3ZM7 3h3v4H7ZM3 10h3v5H3ZM7 10h3v5H7ZM4 8h5" fill="none" stroke="#5f7078" />
        </svg>
      </button>
      <button class="flat drop symbol">CL<i class="chev"></i></button>
      <div class="group">
        <button v-for="p in periods" :key="p" class="chip" :class="{ on: p === 'M' }">{{ p }}</button>
      </div>
      <button class="flat drop period">1 mes<i class="chev"></i></button>
      <div class="group">
        <button v-for="u in units" :key="u" class="chip" :class="{ on: u === '10kU' }">{{ u }}</button>
      </div>
      <button class="flat drop units">10 k unidades<i class="chev"></i></button>
      <button class="flat drop indicators">
        <svg class="icon" viewBox="0 0 18 18">
          <path d="M1 9C4 1 7 4 9 7S14 9 17 4" fill="none" stroke="#14a01e" stroke-width="1.5" />
          <path d="M2 3C6 4 8 9 16 9" fill="none" stroke="#dc3c3c" />
          <path d="M2 17V13H5V11H7V14H9V12H12V14H14V11H17V17Z" fill="#1ec828" stroke="#a01e1e" />
        </svg>
        Indicadores
      </button>
      <button class="flat more" aria-label="Mas indicadores"><i class="chev"></i></button>
      <div class="quote">
        <span class="info">i</span>
        <span class="dot"></span>
        <span class="change">-3,05 %</span>
        <b>1 may 2026</b>
        <span>Crudo EE.UU. (1€)</span>
      </div>
      <div class="window">
        <button class="flat sync" aria-label="Sincronizar">
          <svg class="icon small" viewBox="0 0 18 18">
            <path d="M10 3A5 5 0 0 0 4 9" fill="none" stroke="#f03c46" stroke-width="3" />
            <path d="M1 8H8L4 13Z" fill="#f03c46" />
            <path d="M9 15A5 5 0 0 0 14 9" fill="none" stroke="#14b41e" stroke-width="3" />
            <path d="M11 9H18L14 4Z" fill="#14b41e" />
          </svg>
        </button>
        <button class="flat win" aria-label="Minimizar">
          <svg viewBox="0 0 10 10"><path d="M2 8H9" /></svg>
        </button>
        <button class="flat win" aria-label="Restaurar">
          <svg viewBox="0 0 10 10"><path d="M1 4H7V9H1ZM3 4V1H9V6H7" /></svg>
        </button>
        <button class="flat win" aria-label="Cerrar">
          <svg viewBox="0 0 10 10"><path d="M2 2L8 8M8 2L2 8" /></svg>
        </button>
      </div>
    </header>

    <div class="work">
      <nav class="tools">
        <button class="fold" aria-label="Subir"><i class="chev up"></i></button>
        <div class="tool-list">
          <button v-for="(tool, i) in tools" :key="tool.n" class="tool" :class="{ active: i === 0 }" :aria-label="tool.n">
            <svg class="icon" viewBox="0 0 18 18">
              <path
                v-for="(s, k) in tool.p"
                :key="k"
                :d="s.d"
                :stroke="s.s"
                :fill="s.f || 'none'"
                :stroke-width="s.w || 1"
                :stroke-dasharray="s.dash"
              />
              <text v-if="tool.t" x="9" y="12" class="glyph" :fill="tool.tc">{{ tool.t }}</text>
            </svg>
          </button>
        </div>
        <button class="fold bottom" aria-label="Bajar"><i class="chev"></i></button>
        <button class="extra" aria-label="Opciones">
          <svg class="icon big" viewBox="0 0 20 20">
            <path d="M7 4H16V15H5Z" fill="#f5f5f5" stroke="#666" />
            <path d="M8 12L12 8L15 11M13 13l4 4" fill="none" stroke="#444" stroke-width="2" />
            <circle cx="5" cy="5" r="4" fill="#149628" />
            <text x="5" y="8" class="glyph mini" fill="#fff">1</text>
          </svg>
        </button>
        <button class="extra dots" aria-label="Mas">
          <svg class="icon" viewBox="0 0 18 18">
            <path d="M3 6h3v3H3ZM8 6h3v3H8ZM13 6h3v3h-3ZM9 13h6l-3 3Z" fill="#333" />
          </svg>
        </button>
      </nav>

      <main class="charts">
        <section class="pane">
          <svg class="plot" viewBox="23 19 1577 500">
            <g class="grid">
              <line v-for="y in years" :key="y.label" :x1="y.x" :x2="y.x" y1="31" y2="519" />
              <line v-for="t in priceTicks" :key="t.t" x1="23" :x2="RIGHT" :y1="t.y" :y2="t.y" />
            </g>
            <polygon :points="cloud" fill="#b9fdff" />
            <rect x="212" y="389" width="705" height="50" fill="#eae0d6" />
            <rect x="212" y="439" width="705" height="51" fill="#f2f5ff" />
            <rect x="1018" y="308" width="241" height="44" fill="#c8c8f5" opacity="0.6" />
            <rect x="1018" y="352" width="241" height="55" fill="#e6ffe6" opacity="0.9" />
            <g class="diag">
              <line x1="212" y1="490" x2="917" y2="60" />
              <line x1="1018" y1="498" x2="1257" y2="122" />
            </g>
            <g class="fib">
              <line x1="212" x2="917" y1="389.5" y2="389.5" stroke="#82f082" stroke-dasharray="17 6" />
              <line x1="212" x2="917" y1="439.5" y2="439.5" stroke="#966432" stroke-dasharray="4 2" />
              <line x1="212" x2="917" y1="490.5" y2="490.5" stroke="#aac8ff" stroke-dasharray="2 1" />
              <line x1="1018" x2="1259" y1="308.5" y2="308.5" stroke="#ff8c50" stroke-dasharray="1 2" />
              <line x1="1018" x2="1259" y1="352.5" y2="352.5" stroke="#5050e6" stroke-dasharray="17 6" />
              <line x1="1018" x2="1259" y1="407.5" y2="407.5" stroke="#8cf58c" stroke-dasharray="17 6" />
            </g>
            <g class="fib-label">
              <text x="564" y="387" fill="#5ae65a">76,40 %</text>
              <text x="564" y="437" fill="#7d4614">88,20 %</text>
              <text x="564" y="488" fill="#8296d2">100,00 %</text>
              <text x="1139" y="306" fill="#ff7846">50,00 %</text>
              <text x="1139" y="350" fill="#4646e6">61,80 %</text>
              <text x="1139" y="405" fill="#50e650">76,40 %</text>
            </g>
            <path :d="mainFill.up" fill="#c8ebc8" opacity="0.75" />
            <path :d="mainFill.down" fill="#ffb4b4" opacity="0.6" />
            <text class="headline" x="32" y="61">CL, M</text>
            <text class="headline" x="32" y="98">Crudo EE.UU. (1€)</text>
            <g class="long-avg">
              <path v-for="(r, i) in longAvg" :key="i" :d="r.d" :stroke="r.color" />
            </g>
            <g class="candles">
              <template v-for="(c, i) in candles" :key="i">
                <line :x1="c.x" :x2="c.x" :y1="c.high" :y2="c.low" />
                <rect :x="c.x - 1.5" :y="c.top" width="3" :height="c.height" :fill="c.color" />
              </template>
            </g>
            <path class="dashed-red" :d="toPath(slowAvg)" />
            <g class="avg">
              <path v-for="(r, i) in mainRuns" :key="i" :d="r.d" :stroke="r.color" />
            </g>
            <circle v-for="(d, i) in dots" :key="i" :cx="d[0]" :cy="d[1]" r="3" fill="#c87878" />
            <polyline v-for="(w, i) in waveLines" :key="i" :points="w[1]" :stroke="w[0]" fill="none" />
            <line x1="23" :x2="RIGHT" y1="298" y2="298" stroke="#007d0a" stroke-width="3" />
            <rect x="23.5" y="285.5" width="30" height="11" fill="#fff" stroke="#50a050" />
            <text class="tag" x="25" y="295" fill="#328c32">7.108,0</text>
            <line x1="1004" :x2="RIGHT" y1="119" y2="119" stroke="#1eb41e" stroke-width="2" />
            <text class="tag" x="1006" y="116" fill="#28b428">12.820,6</text>
            <g class="cross">
              <line x1="23" :x2="RIGHT" y1="38.5" y2="38.5" />
              <line x1="1488.5" x2="1488.5" y1="19" y2="517" />
            </g>
            <g class="arrow">
              <line x1="1317" y1="259" x2="1380" y2="164" />
              <line x1="1297" y1="340" x2="1468" y2="74" />
              <polygon points="1375,161 1386,156 1385,167" />
              <polygon points="1463,71 1473,66 1472,77" />
            </g>
            <g v-for="w in waveTags" :key="w.x + w.t" class="wave" :class="w.k">
              <rect :x="w.x - w.w / 2" :y="w.y - w.h / 2" :width="w.w" :height="w.h" :rx="w.k === 'blue' ? 0 : 3" />
              <text :x="w.x" :y="w.y + 4">{{ w.t }}</text>
            </g>
            <text class="source" x="25" y="517">IT-Finance.com - Tiempo Real</text>
            <line x1="271" :x2="RIGHT" y1="518" y2="518" stroke="#28a03c" />
            <line x1="300" :x2="RIGHT" y1="517" y2="517" stroke="#e61414" stroke-width="2" />
            <g class="axis">
              <line :x1="RIGHT" :x2="RIGHT" y1="19" y2="519" />
              <line v-for="t in priceTicks" :key="t.t" :x1="RIGHT" :x2="RIGHT + 4" :y1="t.y" :y2="t.y" />
              <text v-for="t in priceTicks" :key="t.t" x="1575" :y="t.y + 3">{{ t.t }}</text>
              <text x="1575" y="25">16.000</text>
            </g>
            <g v-for="t in axisTags.price" :key="t.t" class="axis-tag" :class="t.k">
              <rect x="1573.5" :y="t.y - 5.5" width="30" height="11" />
              <text x="1575" :y="t.y + 3" :fill="t.color || '#111'">{{ t.t }}</text>
            </g>
          </svg>
          <div class="legend">
            <span class="legend-actions">
              <button class="mini-btn red" aria-label="Vender">✚</button>
              <button class="mini-btn green" aria-label="Comprar">✚</button>
              <button class="close" aria-label="Cerrar panel">×</button>
            </span>
            <button class="legend-item"><i class="mark box"></i>Precio</button>
            <button class="legend-item" aria-label="Lista">
              <svg class="list" viewBox="0 0 9 9"><path d="M0 1h2M3 1h6M0 4h2M3 4h6M0 7h2M3 7h6" /></svg>
            </button>
            <button v-for="l in legend" :key="l.name" class="legend-item">
              <i class="mark" :class="l.mark"></i>{{ l.name }}
            </button>
          </div>
        </section>

        <section v-for="p in panes" :key="p.id" class="pane">
          <svg class="plot" :viewBox="`23 ${p.top} 1577 ${p.height}`">
            <g class="grid">
              <line v-for="y in years" :key="y.label" :x1="y.x" :x2="y.x" :y1="p.top" :y2="p.id === 'barra' ? 831 : p.top + p.height" />
              <line v-for="y in paneGrid[p.id]" :key="y" x1="23" :x2="RIGHT" :y1="y" :y2="y" />
            </g>

            <g v-if="p.id === 'trenes'">
              <rect x="23" y="527" width="1236" height="16" fill="#d7f5d7" />
              <rect x="23" y="591" width="1236" height="15" fill="#ffdcd7" />
              <path :d="slowFill.up" fill="#bebee6" />
              <path :d="slowFill.down" fill="#f5bef0" />
              <path d="M152 543L160 532H214L220 543ZM968 543L975 533H1012L1022 543ZM62 543L72 537H98L106 543Z" fill="#5aaa5a" opacity="0.8" />
              <path d="M622 591L630 599L652 603L672 591Z" fill="#b97873" opacity="0.8" />
              <g class="levels">
                <line x1="23" x2="1259" y1="527.5" y2="527.5" />
                <line x1="23" x2="1259" y1="543.5" y2="543.5" />
                <line x1="23" x2="1259" y1="590.5" y2="590.5" />
                <line x1="23" x2="1259" y1="606.5" y2="606.5" />
                <line x1="23" x2="1257" y1="566.5" y2="566.5" class="mid" />
              </g>
              <g fill="none" stroke-linejoin="round">
                <path :d="fastLagPath" stroke="#143c14" stroke-dasharray="3 2" />
                <path v-for="(r, i) in fastRuns" :key="'f' + i" :d="r.d" :stroke="r.color" stroke-width="1.5" />
                <path :d="slowLagPath" stroke="#000" stroke-width="2" stroke-dasharray="5 5" />
                <path v-for="(r, i) in slowRuns" :key="'s' + i" :d="r.d" :stroke="r.color" stroke-width="3" />
              </g>
              <polygon v-for="(t, i) in trainDown" :key="'d' + i" :points="tri(t, 'down')" fill="#be0000" />
              <polygon v-for="(t, i) in trainUp" :key="'u' + i" :points="tri(t, 'up')" fill="#0000be" />
            </g>

            <g v-if="p.id === 'willy'">
              <rect v-for="(b, i) in willyBands" :key="i" :x="b.x" y="611" :width="b.w" height="88" :fill="b.color" />
              <path :d="willyOver" fill="#288c46" opacity="0.45" />
              <path :d="willyUnder" fill="#8c1e28" opacity="0.5" />
              <g class="levels">
                <line x1="23" x2="1257" y1="618.5" y2="618.5" class="dash" />
                <line x1="23" x2="1257" y1="694.5" y2="694.5" class="dash" />
                <line x1="23" x2="1257" y1="657" y2="657" class="mid" />
                <line x1="23" x2="1259" y1="638" y2="638" class="upper" />
                <line x1="23" x2="1259" y1="676" y2="676" class="lower" />
              </g>
              <g fill="none" stroke-width="3" stroke-linejoin="round">
                <path v-for="(r, i) in willyRuns" :key="i" :d="r.d" :stroke="r.color" />
              </g>
              <polygon v-for="(t, i) in willyDown" :key="'d' + i" :points="tri(t, 'down', 5)" fill="#be0000" />
              <polygon v-for="(t, i) in willyUp" :key="'u' + i" :points="tri(t, 'up', 5)" fill="#0000be" />
            </g>

            <g v-if="p.id === 'awesome'">
              <line v-for="(b, i) in paleBars" :key="'p' + i" :x1="b.x" :x2="b.x" :y1="b.y1" :y2="b.y2" :stroke="b.color" />
              <rect v-for="(b, i) in oscBars" :key="'b' + i" :x="b.x" :y="b.y" width="3" :height="b.h" :fill="b.color" />
              <line x1="23" x2="1259" y1="742" y2="742" stroke="#1414e6" stroke-width="2" />
              <g fill="none" stroke-width="3" stroke-linejoin="round">
                <path v-for="(r, i) in oscRuns" :key="'o' + i" :d="r.d" :stroke="r.color" />
                <path v-for="(r, i) in signalRuns" :key="'s' + i" :d="r.d" :stroke="r.color" />
              </g>
              <polygon v-for="(t, i) in oscDown" :key="'d' + i" :points="tri(t, 'down')" fill="#ffff00" />
              <polygon v-for="(t, i) in oscUp" :key="'u' + i" :points="tri(t, 'up')" fill="#14f0ff" />
            </g>

            <g v-if="p.id === 'barra'">
              <rect v-for="(b, i) in forceBands" :key="'b' + i" :x="b.x" y="785" :width="b.w" height="46" :fill="b.color" />
              <rect v-for="(b, i) in forceBars" :key="'f' + i" :class="b.kind" :x="b.x" :y="b.y" width="4" :height="b.h" />
              <line x1="23" x2="1259" y1="826.5" y2="826.5" stroke="#00003c" />
              <line x1="1488.5" x2="1488.5" y1="785" y2="831" stroke="#ff8c8c" />
              <g class="axis">
                <line x1="23" :x2="RIGHT" y1="831" y2="831" />
                <line v-for="y in years" :key="y.label" :x1="y.x" :x2="y.x" y1="831" y2="834" />
              </g>
              <g class="years">
                <text v-for="y in years" :key="y.label" :x="y.x" y="842">{{ y.label }}</text>
              </g>
              <rect x="1471.5" y="834.5" width="34" height="9" fill="#ffff00" stroke="#8c8c3c" />
              <text class="years" x="1489" y="842">abr 2030</text>
            </g>

            <line v-if="p.id !== 'barra'" x1="1331.5" x2="1331.5" :y1="p.top" :y2="p.top + p.height" stroke="#ff8c8c" />
            <g class="axis">
              <line :x1="RIGHT" :x2="RIGHT" :y1="p.top" :y2="p.id === 'barra' ? 831 : p.top + p.height" />
              <line class="divider" x1="23" x2="1600" :y1="p.top" :y2="p.top" />
            </g>
            <g v-for="t in axisTags[p.id]" :key="t.y" class="axis-tag" :class="t.k">
              <line :x1="RIGHT" :x2="RIGHT + 4" :y1="t.y" :y2="t.y" stroke="#5a7887" />
              <rect x="1573.5" :y="t.y - 5.5" :width="t.w || 30" height="11" />
              <text x="1575" :y="t.y + 3" :fill="t.color || '#222'">{{ t.t }}</text>
            </g>
          </svg>
          <div class="legend">
            <span class="legend-actions"><button class="close" aria-label="Cerrar panel">×</button></span>
            <button class="legend-item title"><i class="mark" :class="p.mark"></i>{{ p.title }}</button>
          </div>
        </section>
      </main>
    </div>

    <footer class="footer">
      <button class="tool corner" aria-label="Dibujo">
        <svg class="icon" viewBox="0 0 18 18">
          <path d="M1 5L5 15L9 5" fill="none" stroke="#c83232" />
          <path d="M2 9L7 15L11 8" fill="none" stroke="#28963c" />
          <path d="M6 15L14 4L17 6L9 16Z" fill="#ffbe1e" stroke="#8c5a00" />
        </svg>
      </button>
      <div class="foot-group left">
        <button v-for="tool in footLeft" :key="tool.n" class="tool" :aria-label="tool.n">
          <svg class="icon" viewBox="0 0 18 18">
            <path v-for="(s, k) in tool.p" :key="k" :d="s.d" :stroke="s.s" :fill="s.f || 'none'" :stroke-width="s.w || 1" />
          </svg>
        </button>
        <button class="collapse" aria-label="Plegar">«</button>
      </div>
      <div class="scroll">
        <button class="scroll-btn" aria-label="Anterior"><i class="chev prev"></i></button>
        <div class="track"><div class="thumb"></div></div>
        <button class="scroll-btn" aria-label="Siguiente"><i class="chev next"></i></button>
      </div>
      <div class="foot-group right">
        <button v-for="tool in footRight" :key="tool.n" class="tool" :aria-label="tool.n">
          <svg class="icon" viewBox="0 0 18 18">
            <path
              v-for="(s, k) in tool.p"
              :key="k"
              :d="s.d"
              :stroke="s.s"
              :fill="s.f || 'none'"
              :stroke-width="s.w || 1"
              :stroke-dasharray="s.dash"
            />
          </svg>
        </button>
      </div>
    </footer>
  </div>
</template>

<style>
body {
  margin: 0;
  overflow-x: hidden;
  background: #fff;
}
</style>

<style scoped>
.app {
  font-family: "Liberation Sans", Arial, sans-serif;
  font-size: 8px;
  color: #1e2a30;
}

.app * {
  box-sizing: border-box;
}

button {
  margin: 0;
  padding: 0;
  border: 0;
  background: none;
  font: inherit;
  color: inherit;
  cursor: pointer;
}

.toolbar {
  display: flex;
  align-items: stretch;
  height: 19px;
  background: linear-gradient(#8fb0c0, #b3d2de 30%, #a5c4d1);
  border-top: 1px solid #54788a;
  border-bottom: 1px solid #4c6e7e;
  font-weight: 700;
  white-space: nowrap;
}

.flat {
  display: flex;
  align-items: center;
  justify-content: center;
  padding: 0 2px;
}

.toolbar > .flat {
  border-right: 1px solid #86a3b0;
}

.icon {
  display: block;
  width: 15px;
  height: 15px;
}

.icon.thin {
  width: 8px;
}

.icon.small {
  width: 13px;
  height: 13px;
}

.icon.big {
  width: 18px;
  height: 18px;
}

.chev {
  width: 4px;
  height: 4px;
  border: solid #222;
  border-width: 0 1px 1px 0;
  transform: rotate(45deg);
}

.drop .chev,
.more .chev {
  margin-bottom: 2px;
}

.chev.up {
  transform: rotate(225deg);
}

.chev.prev {
  transform: rotate(135deg);
}

.chev.next {
  transform: rotate(-45deg);
}

.symbol {
  width: 31px;
  gap: 6px;
}

.period {
  width: 39px;
  gap: 7px;
}

.units {
  width: 70px;
  gap: 5px;
}

.indicators {
  width: 71px;
  gap: 4px;
}

.more {
  width: 12px;
}

.group {
  display: flex;
  align-items: center;
  gap: 3px;
  padding: 0 3px;
  border-right: 1px solid #86a3b0;
}

.chip {
  height: 13px;
  padding: 0 1px;
  border: 1px solid #84a1ae;
  border-radius: 3px;
  background: #aecbd7;
}

.chip.on {
  background: #8ba6b2;
  border-color: #6f8b98;
}

.quote {
  display: flex;
  align-items: center;
  gap: 4px;
  padding-left: 5px;
}

.quote span:last-child {
  font-weight: 400;
}

.info {
  width: 8px;
  height: 9px;
  background: #eef2f4;
  color: #778;
  line-height: 9px;
  text-align: center;
}

.dot {
  width: 6px;
  height: 6px;
  margin: 0 2px;
  border-radius: 3px;
  background: #8a8088;
}

.change {
  padding: 0 2px;
  border-radius: 2px;
  background: #f0505a;
  color: #fff;
  font-weight: 400;
  line-height: 12px;
}

.window {
  display: flex;
  margin-left: auto;
}

.sync {
  border: solid #6c8a98;
  border-width: 0 1px;
}

.win {
  width: 12px;
}

.win svg {
  width: 9px;
  height: 9px;
  fill: none;
  stroke: #5f7a86;
}

.work {
  display: flex;
}

.tools {
  display: flex;
  flex-direction: column;
  flex: 0 0 23px;
  background: #9fbbc7;
  border-left: 1px solid #5d7c8a;
  border-right: 1px solid #7995a1;
}

.fold {
  display: flex;
  align-items: center;
  justify-content: center;
  height: 10px;
}

.fold.bottom {
  border: solid #7995a1;
  border-width: 1px 0;
  background: #b3cfdb;
}

.tool-list {
  display: flex;
  flex: 1;
  flex-direction: column;
}

.tool {
  display: flex;
  flex: 1;
  align-items: center;
  justify-content: center;
}

.tool.active {
  border: 1px solid #718c98;
  background: #8aa5b1;
}

.extra {
  display: flex;
  align-items: center;
  justify-content: center;
  height: 28px;
}

.extra.dots {
  height: 20px;
}

.glyph {
  font-size: 9px;
  font-weight: 700;
  text-anchor: middle;
}

.glyph.mini {
  font-size: 7px;
}

.charts {
  flex: 1;
  min-width: 0;
}

.pane {
  position: relative;
}

.plot {
  display: block;
  width: 100%;
  height: auto;
}

.grid line {
  stroke: #e6e6e6;
  stroke-dasharray: 1 3;
}

.diag line {
  stroke: #cdcdcd;
  stroke-dasharray: 1 3;
}

.fib-label text,
.axis text,
.axis-tag text,
.years {
  font-size: 8px;
  font-weight: 700;
}

.fib-label text,
.years {
  text-anchor: middle;
}

.headline {
  font-size: 33px;
  font-weight: 700;
}

.tag {
  font-size: 8px;
  font-weight: 700;
}

.source {
  font-size: 8px;
}

.dashed-red {
  fill: none;
  stroke: #a00000;
  stroke-width: 1.5;
  stroke-dasharray: 4 3;
}

.long-avg path {
  fill: none;
  stroke-width: 3;
  stroke-dasharray: 6 6;
}

.candles line {
  stroke: #333;
}

.candles rect {
  stroke: #111;
}

.avg path {
  fill: none;
  stroke-width: 3;
  stroke-linejoin: round;
}

.cross line {
  stroke: #ff8c8c;
}

.arrow line {
  stroke: #000;
  stroke-width: 2;
  stroke-dasharray: 2 4;
}

.wave rect {
  fill: #fff;
  fill-opacity: 0.7;
  stroke: #78a5ff;
}

.wave text {
  font-size: 10px;
  text-anchor: middle;
}

.wave.blue text {
  fill: #6496ff;
}

.wave.small text {
  font-size: 8px;
}

.wave.orange text {
  fill: #a06428;
}

.axis line {
  stroke: #7d96a0;
}

.axis .divider {
  stroke: #8ca0aa;
  stroke-width: 3;
}

.axis-tag rect {
  fill: #fff;
  stroke: #78919b;
}

.axis-tag.plain rect {
  display: none;
}

.axis-tag.yellow rect {
  fill: #ffff00;
}

.levels line {
  stroke: #111;
}

.levels .upper {
  stroke: #00008c;
  stroke-width: 2;
}

.levels .lower {
  stroke: #c80000;
  stroke-width: 2;
}

.levels .mid {
  stroke: #0000aa;
  stroke-width: 2;
  stroke-dasharray: 4 4;
}

.levels .dash {
  stroke-dasharray: 4 3;
}

.force-blue {
  fill: #3232d2;
  stroke: #1414a0;
}

.force-red {
  fill: #d26e78;
  stroke: #b41e28;
}

.legend {
  position: absolute;
  top: 0;
  left: 0;
  display: flex;
  height: 13px;
  background: #cbdae1;
  border-bottom: 1px solid #8aa0aa;
  font-weight: 700;
  white-space: nowrap;
}

.legend-actions {
  display: flex;
  align-items: center;
  gap: 3px;
  padding: 0 3px 0 2px;
  border-right: 1px solid #8aa0aa;
}

.legend-item {
  display: flex;
  align-items: center;
  gap: 3px;
  padding: 0 2px;
  border-right: 1px solid #8aa0aa;
}

.mini-btn {
  width: 8px;
  height: 9px;
  background: #fff;
  border: 1px solid #9ab;
  font-size: 6px;
  line-height: 7px;
}

.mini-btn.red {
  color: #f01e1e;
}

.mini-btn.green {
  color: #14b41e;
}

.close {
  width: 9px;
  height: 9px;
  border-radius: 5px;
  background: #4a7296;
  color: #fff;
  line-height: 8px;
}

.mark {
  width: 7px;
  height: 7px;
  background: #6e838e;
}

.mark.box {
  border: 1px solid #8496a0;
  background: #dfe8ec;
}

.mark.black {
  background: #000;
}

.mark.duo {
  background: linear-gradient(90deg, #000 50%, #7f8f8f 50%);
}

.mark.stripes {
  background: linear-gradient(90deg, #14c81e 20%, #1414dc 20% 40%, #f01e1e 40% 60%, #ffe600 60% 80%, #f01e1e 80%);
}

.list {
  width: 8px;
  height: 8px;
  stroke: #333;
}

.footer {
  display: flex;
  height: 17px;
  background: #a0bcc8;
  border-top: 1px solid #6c8a98;
}

.corner {
  flex: 0 0 23px;
  border-right: 1px solid #7995a1;
}

.foot-group {
  display: flex;
  align-items: center;
}

.foot-group .tool {
  flex: 0 0 18px;
}

.foot-group.right {
  margin-left: 2px;
}

.collapse {
  width: 10px;
  font-size: 12px;
}

.scroll {
  display: flex;
  flex: 1;
  align-items: center;
}

.scroll-btn {
  display: flex;
  align-items: center;
  justify-content: center;
  width: 10px;
  height: 11px;
  border: 1px solid #7995a1;
  background: #b3cfdb;
}

.track {
  display: flex;
  flex: 1;
  justify-content: flex-end;
  height: 11px;
  border: solid #7995a1;
  border-width: 1px 0;
  background: #98b5c1;
}

.thumb {
  flex: 0 0 54%;
  border-left: 1px solid #7995a1;
  background: linear-gradient(#bcdce8, #a0c0ce);
}
</style>
